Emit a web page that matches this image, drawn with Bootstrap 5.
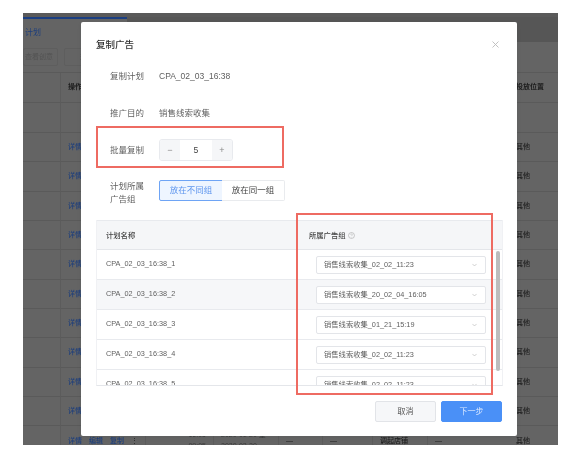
<!DOCTYPE html>
<html lang="zh">
<head>
<meta charset="utf-8">
<title>复制广告</title>
<link rel="stylesheet" href="https://cdn.jsdelivr.net/npm/bootstrap@5.3.0/dist/css/bootstrap.min.css">
<style>
html,body{margin:0;background:#fff;overflow:hidden}
body{width:573px;height:452px;font-family:"Liberation Sans","Noto Sans CJK SC",sans-serif;font-size:8.5px;color:#5f5f5f}
.shot{width:573px;height:452px;padding:13px 15px 7px 23px;filter:blur(.45px)}
.frame{position:relative;width:535px;height:432px;background:#646464;overflow:hidden;color:#1c1c1c}
.topband{height:29px;background:#565656;border-top:4px solid #5a5a5a}
.tabline{height:2px;width:104px;background:#1b3f82}
.tabtext{font-size:8px;padding:7px 0 0 2px;line-height:14px;color:#1e3f7c;background:#646464;width:104px;height:23px}
.toolbar{height:31px;padding-top:6px;gap:6px;border-bottom:1px solid #5a5a5a}
.toolbtn{height:18px;width:35px;border:1px solid #5e5e5e;border-radius:2px;font-size:7px;line-height:16px;text-align:right;color:#535353;padding-right:4px;overflow:hidden;white-space:nowrap}
.gridbg{width:535px;table-layout:fixed;border-collapse:separate;border-spacing:0}
.gridbg td{height:29.35px;padding:0 0 0 7px;border-bottom:1px solid #5a5a5a;font-size:7px;font-weight:500;white-space:nowrap;overflow:hidden;vertical-align:middle}
.gridbg tr.hdrow td{height:30px}
.gridbg td.cellv{border-left:1px solid #5c5c5c}
.gridbg td.rpos{padding-left:2px}
.gridbg td.tall{line-height:10.5px;color:#3a3a3a}
.gridbg td.tend{text-align:right;padding:0 7px 0 0}
.lnk{color:#1e3f7c;margin-right:7px}
.dlg{position:absolute;left:58px;top:9px;width:436px;height:414px;background:#fff;border-radius:2px;color:#5f5f5f}
.dlghead{height:35.5px;padding:15px 18px 0 15px}
.dlgtitle{font-size:9.5px;font-weight:500;color:#333;line-height:15px;margin:0}
.dlgx{width:7px;height:7px;margin-top:4px}
.frow{height:37px;padding-left:29px}
.flabel{width:49px;flex:none;line-height:13px;color:#5f5f5f}
.stepper{width:74px;height:22px;border:1px solid #e8eaee;border-radius:3px;overflow:hidden;background:#fff}
.stepbtn{width:20px;background:#f5f6f8;color:#888;font-size:9px;line-height:20px;text-align:center}
.stepval{flex:1;text-align:center;line-height:20px;font-size:8.6px;color:#444}
.segrow{height:40px;padding:11.5px 0 0 29px}
.seg{height:21px;width:64px;font-size:8.5px;line-height:19px;text-align:center;border:1px solid #e9ebee;background:#fff;color:#444;padding:0;border-radius:0}
.seg.on{background:#eef5ff;border-color:#6ea4f5;color:#5d95ee;border-radius:2px 0 0 2px}
.seg.off{border-left:0;border-radius:0 2px 2px 0;width:63px}
.listwrap{margin:11.5px 14px 0 15px;position:relative;border-left:1px solid #f0f1f4;border-right:1px solid #f0f1f4;border-bottom:1px solid #e4e6ea;font-size:7.3px}
.listhead{height:30px;background:#f5f6f8;border-top:1px solid #e8eaee;border-bottom:1px solid #e4e6ea;font-weight:500;color:#444;line-height:29px}
.colname{width:202px;padding-left:9px;flex:none}
.colgroup{padding-left:10px;flex:1}
.listbody{height:135px;overflow:hidden}
.lrow{height:30px;border-bottom:1px solid #e8eaee;flex:none}
.lrow.alt{background:#f6f7f9}
.pick{width:170px;height:18px;margin-left:17px;border:1px solid #e3e5e9;border-radius:2px;background:#fff;padding:0 8px 0 7px;line-height:16px}
.chev{width:5px;height:4px}
.thumb{position:absolute;right:2px;top:31px;width:4px;height:120px;border-radius:2px;background:#bcbcbc}
.help{width:7px;height:7px;margin-left:3px;vertical-align:-1px}
.dlgfoot{padding:15px 15px 0 0;gap:5px}
.fbtn{width:61px;height:21px;padding:0;font-size:8px;line-height:19px;border-radius:2px}
.fcancel{background:#f6f7f9;border:1px solid #e2e4e8;color:#555}
.fnext{background:#4a90f7;border:1px solid #4a90f7;color:#dbe9ff}
.ann{position:absolute;border:2px solid #ee6b62;pointer-events:none}
.ann1{left:15px;top:104px;width:188px;height:42px}
.ann2{left:215px;top:191px;width:197px;height:182px}
.gridbg tr.lastrow td{height:30px}
</style>
</head>
<body>
<div class="shot">
  <div class="frame">
    <div class="topband">
      <div class="tabline"></div>
      <div class="tabtext">计划</div>
    </div>
    <div class="toolbar d-flex">
      <div class="toolbtn">查看创意</div>
      <div class="toolbtn">规则</div>
    </div>
    <table class="gridbg">
      <colgroup><col style="width:37px"><col style="width:85px"><col style="width:68px"><col style="width:65px"><col style="width:44px"><col style="width:50px"><col style="width:55px"><col style="width:87px"><col style="width:44px"></colgroup>
      <tr class="hdrow"><td></td><td class="cellv fw-bold">操作</td><td></td><td></td><td></td><td></td><td></td><td></td><td class="rpos fw-bold">投放位置</td></tr>
      <tr class="hdrow"><td></td><td class="cellv"></td><td></td><td></td><td></td><td></td><td></td><td></td><td class="rpos"></td></tr>
      <tr><td></td><td class="cellv"><span class="lnk">详情</span></td><td></td><td></td><td></td><td></td><td></td><td></td><td class="rpos">其他</td></tr>
      <tr><td></td><td class="cellv"><span class="lnk">详情</span></td><td></td><td></td><td></td><td></td><td></td><td></td><td class="rpos">其他</td></tr>
      <tr><td></td><td class="cellv"><span class="lnk">详情</span></td><td></td><td></td><td></td><td></td><td></td><td></td><td class="rpos">其他</td></tr>
      <tr><td></td><td class="cellv"><span class="lnk">详情</span></td><td></td><td></td><td></td><td></td><td></td><td></td><td class="rpos">其他</td></tr>
      <tr><td></td><td class="cellv"><span class="lnk">详情</span></td><td></td><td></td><td></td><td></td><td></td><td></td><td class="rpos">其他</td></tr>
      <tr><td></td><td class="cellv"><span class="lnk">详情</span></td><td></td><td></td><td></td><td></td><td></td><td></td><td class="rpos">其他</td></tr>
      <tr><td></td><td class="cellv"><span class="lnk">详情</span></td><td></td><td></td><td></td><td></td><td></td><td></td><td class="rpos">其他</td></tr>
      <tr><td></td><td class="cellv"><span class="lnk">详情</span></td><td></td><td></td><td></td><td></td><td></td><td></td><td class="rpos">其他</td></tr>
      <tr><td></td><td class="cellv"><span class="lnk">详情</span></td><td></td><td></td><td></td><td></td><td></td><td></td><td class="rpos">其他</td></tr>
      <tr><td></td><td class="cellv"><span class="lnk">详情</span></td><td></td><td></td><td></td><td></td><td></td><td></td><td class="rpos">其他</td></tr>
      <tr class="lastrow"><td></td><td class="cellv"><span class="lnk">详情</span><span class="lnk">编辑</span><span class="lnk">复制</span>⋮</td><td class="cellv tall tend">16:05<br>09:05</td><td class="cellv tall">2020-01-20 星<br>2020-02-20</td><td class="cellv">—</td><td class="cellv">—</td><td class="cellv">调起店铺</td><td class="cellv">—</td><td class="rpos">其他</td></tr>
    </table>

    <div class="dlg shadow-sm" role="dialog">
      <div class="dlghead d-flex justify-content-between align-items-start">
        <h5 class="dlgtitle">复制广告</h5>
        <svg class="dlgx" viewBox="0 0 7 7"><path d="M.5.5l6 6M6.5.5l-6 6" stroke="#bbb" stroke-width=".9" fill="none"/></svg>
      </div>
      <div class="frow d-flex align-items-center"><div class="flabel">复制计划</div><div>CPA_02_03_16:38</div></div>
      <div class="frow d-flex align-items-center"><div class="flabel">推广目的</div><div>销售线索收集</div></div>
      <div class="frow d-flex align-items-center">
        <div class="flabel">批量复制</div>
        <div class="stepper d-flex"><div class="stepbtn">−</div><div class="stepval">5</div><div class="stepbtn">+</div></div>
      </div>
      <div class="segrow d-flex align-items-start">
        <div class="flabel">计划所属<br>广告组</div>
        <div class="btn-group" role="group">
          <button type="button" class="btn seg on">放在不同组</button>
          <button type="button" class="btn seg off">放在同一组</button>
        </div>
      </div>
      <div class="listwrap">
        <div class="listhead d-flex">
          <div class="colname">计划名称</div>
          <div class="colgroup">所属广告组<svg class="help" viewBox="0 0 8 8"><circle cx="4" cy="4" r="3.4" fill="none" stroke="#aaa" stroke-width=".7"/><path d="M3 3.2c0-1.3 2-1.3 2 0 0 .8-1 .7-1 1.5M4 5.8v.5" stroke="#aaa" stroke-width=".6" fill="none"/></svg></div>
        </div>
        <div class="listbody d-flex flex-column">
          <div class="lrow d-flex align-items-center"><div class="colname">CPA_02_03_16:38_1</div><div class="pick d-flex justify-content-between align-items-center"><span>销售线索收集_02_02_11:23</span><svg class="chev" viewBox="0 0 6 4"><path d="M.5.7L3 3.2 5.5.7" fill="none" stroke="#bbb" stroke-width=".8"/></svg></div></div>
          <div class="lrow alt d-flex align-items-center"><div class="colname">CPA_02_03_16:38_2</div><div class="pick d-flex justify-content-between align-items-center"><span>销售线索收集_20_02_04_16:05</span><svg class="chev" viewBox="0 0 6 4"><path d="M.5.7L3 3.2 5.5.7" fill="none" stroke="#bbb" stroke-width=".8"/></svg></div></div>
          <div class="lrow d-flex align-items-center"><div class="colname">CPA_02_03_16:38_3</div><div class="pick d-flex justify-content-between align-items-center"><span>销售线索收集_01_21_15:19</span><svg class="chev" viewBox="0 0 6 4"><path d="M.5.7L3 3.2 5.5.7" fill="none" stroke="#bbb" stroke-width=".8"/></svg></div></div>
          <div class="lrow d-flex align-items-center"><div class="colname">CPA_02_03_16:38_4</div><div class="pick d-flex justify-content-between align-items-center"><span>销售线索收集_02_02_11:23</span><svg class="chev" viewBox="0 0 6 4"><path d="M.5.7L3 3.2 5.5.7" fill="none" stroke="#bbb" stroke-width=".8"/></svg></div></div>
          <div class="lrow d-flex align-items-center"><div class="colname">CPA_02_03_16:38_5</div><div class="pick d-flex justify-content-between align-items-center"><span>销售线索收集_02_02_11:23</span><svg class="chev" viewBox="0 0 6 4"><path d="M.5.7L3 3.2 5.5.7" fill="none" stroke="#bbb" stroke-width=".8"/></svg></div></div>
        </div>
        <div class="thumb"></div>
      </div>
      <div class="dlgfoot d-flex justify-content-end">
        <button type="button" class="btn fbtn fcancel">取消</button>
        <button type="button" class="btn fbtn fnext">下一步</button>
      </div>
      <div class="ann ann1"></div>
      <div class="ann ann2"></div>
    </div>
  </div>
</div>
<script src="https://cdn.jsdelivr.net/npm/bootstrap@5.3.0/dist/js/bootstrap.bundle.min.js"></script>
</body>
</html>
